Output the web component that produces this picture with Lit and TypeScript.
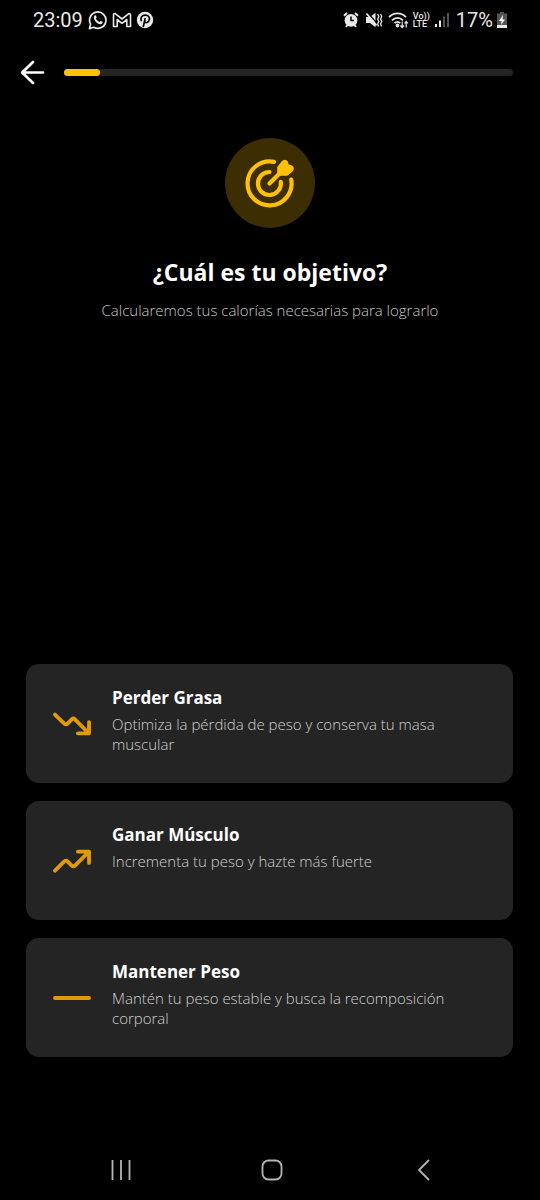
import { LitElement, html, css, svg } from "lit";
import { customElement, property } from "lit/decorators.js";

const trendDown = svg`<path d="M2 7.2 L8.3 13.2 Q9.4 14.3 10.5 13.2 L13.3 10.4 Q14.4 9.3 15.5 10.4 L24.5 19.4 M17.5 19.8 H25 V12.2" />`;
const trendUp = svg`<path d="M2 20 L8.3 13.8 Q9.4 12.7 10.5 13.8 L13.3 16.6 Q14.4 17.7 15.5 16.6 L24.5 7.6 M17.5 7.2 H25 V14.8" />`;
const flat = svg`<path d="M2 13.5 H25" />`;

const goals = [
  { title: "Perder Grasa", text: "Optimiza la pérdida de peso y conserva tu masa muscular", icon: trendDown },
  { title: "Ganar Músculo", text: "Incrementa tu peso y hazte más fuerte", icon: trendUp },
  { title: "Mantener Peso", text: "Mantén tu peso estable y busca la recomposición corporal", icon: flat },
];

@customElement("status-bar")
class StatusBar extends LitElement {
  static styles = css`
    :host {
      display: flex;
      align-items: center;
      justify-content: space-between;
      height: 40px;
      padding: 0 33px;
      color: #e8e8e8;
      font: 20px/24px Roboto, sans-serif;
    }
    .side { display: flex; align-items: center; gap: 4px; }
    .time { margin-right: 1px; }
    .level { margin-left: 2px; }
    svg { display: block; flex: none; }
    .volte {
      display: flex;
      flex-direction: column;
      font: 500 9px/8px Roboto, sans-serif;
    }
  `;
  render() {
    return html`
      <div class="side">
        <span class="time">23:09</span>
        <svg width="20" height="20" viewBox="0 0 20 20" fill="none" stroke="currentColor" stroke-width="1.7">
          <path d="M1.4 18.6 L2.6 14.1 A8.2 8.2 0 1 1 5.8 17.3 Z" stroke-linejoin="round" />
          <path d="M6.2 6 C6.8 5 7.8 5 8 5.6 L8.7 7.3 L7.9 8.5 C8.7 10.2 9.8 11.2 11.5 12 L12.7 10.9 L14.5 11.8 C15 12.2 14.6 13.6 13.5 14 C10 15.3 4.5 9.8 6.2 6 Z" fill="currentColor" stroke="none" />
        </svg>
        <svg width="20" height="16" viewBox="0 0 20 16" fill="none" stroke="currentColor" stroke-width="1.6" stroke-linejoin="round">
          <path d="M1.5 14.5 V3 Q1.5 1.4 3.2 1.6 L10 7 L16.8 1.6 Q18.5 1.4 18.5 3 V14.5 H14.8 V7.5 L10 11.3 L5.2 7.5 V14.5 Z" />
        </svg>
        <svg width="18" height="18" viewBox="0 0 18 18">
          <circle cx="9" cy="9" r="8.2" fill="currentColor" />
          <path d="M5.6 10.2 C3.6 7 6 4.2 9.3 4.2 C12.4 4.2 13.8 6.2 13.4 8.4 C12.9 11.3 10 12.4 8.7 10.8 M9.3 7 L7.2 16" fill="none" stroke="#000" stroke-width="1.7" />
        </svg>
      </div>
      <div class="side">
        <svg width="18" height="18" viewBox="0 0 18 18">
          <path d="M2 4.8 L5 2 M16 4.8 L13 2 M4 15.8 L5.4 14 M14 15.8 L12.6 14" stroke="currentColor" stroke-width="2" />
          <circle cx="9" cy="9.3" r="6.4" fill="currentColor" />
          <path d="M9 5.5 V9.6 H12" fill="none" stroke="#000" stroke-width="1.5" />
        </svg>
        <svg width="20" height="18" viewBox="0 0 20 18">
          <path d="M2 6 H6 L11.5 1.8 V16.2 L6 12 H2 Z" fill="currentColor" />
          <path d="M3.5 1.5 L14 13.5" stroke="#000" stroke-width="1.4" />
          <path d="M2.5 2.5 L12.5 14.5" stroke="currentColor" stroke-width="1.8" />
          <path d="M13.6 3 L14.9 5.5 L13.6 8 L14.9 10.5 L13.6 13 L14.6 15.5 M16.6 3 L17.7 5.5 L16.6 8 L17.7 10.5 L16.6 13 L17.6 15.5" fill="none" stroke="currentColor" stroke-width="1.3" />
        </svg>
        <svg width="21" height="18" viewBox="0 0 21 18" fill="none" stroke="currentColor" stroke-width="1.8">
          <path d="M1 6.2 C6 1.2 13 1.2 18 6.2 M4 9.4 C7.3 6.2 11.7 6.2 15 9.4 M6.6 12.2 C8.4 10.5 10.6 10.5 12.2 12.2" />
          <circle cx="9.5" cy="14.5" r="1" fill="currentColor" />
          <path d="M14.2 10.5 V16.5 M12.4 14.5 L14.2 16.5 L16 14.5 M18.2 16.5 V10.5 M16.6 12.3 L18.2 10.5 L19.8 12.3" stroke-width="1.2" />
        </svg>
        <span class="volte"><span>Vo))</span><span>LTE</span></span>
        <svg width="16" height="16" viewBox="0 0 16 16" fill="currentColor">
          <rect x="1" y="12" width="2" height="3" />
          <rect x="5" y="8.5" width="2" height="6.5" />
          <rect x="9" y="4.5" width="2" height="10.5" opacity="0.35" />
          <rect x="13" y="1" width="2" height="14" opacity="0.35" />
        </svg>
        <span class="level">17%</span>
        <svg width="10" height="18" viewBox="1 0 10 18">
          <path d="M4 1 H8 V2.5 H11 V17 H1 V2.5 H4 Z" fill="#555" />
          <path d="M1 14 H11 V17 H1 Z" fill="currentColor" />
          <path d="M7 4 L3 10 H5.6 L5 14 L9 8.4 H6.5 Z" fill="#fff" />
        </svg>
      </div>
    `;
  }
}

@customElement("goal-card")
class GoalCard extends LitElement {
  @property({ attribute: false }) goal = goals[0];
  static styles = css`
    :host { display: block; }
    .card {
      display: flex;
      width: 100%;
      min-height: 119px;
      box-sizing: border-box;
      padding: 22px 26px;
      gap: 20px;
      border: 0;
      border-radius: 13px;
      background: #242424;
      color: #fff;
      font-family: "Open Sans", sans-serif;
      text-align: left;
      cursor: pointer;
    }
    .icon {
      flex: none;
      align-self: center;
      fill: none;
      stroke: #e19a0a;
      stroke-width: 2.6;
      stroke-linecap: round;
      stroke-linejoin: round;
    }
    .copy { display: flex; flex-direction: column; gap: 4px; align-self: flex-start; }
    .title { font-size: 17px; line-height: 24px; font-weight: 700; }
    .text { font-size: 15px; line-height: 20px; font-weight: 300; color: #d0d0d0; }
  `;
  render() {
    return html`
      <button class="card" type="button">
        <svg class="icon" width="40" height="40" viewBox="0 0 27 27" aria-hidden="true">${this.goal.icon}</svg>
        <span class="copy">
          <span class="title">${this.goal.title}</span>
          <span class="text">${this.goal.text}</span>
        </span>
      </button>
    `;
  }
}

@customElement("app-root")
class AppRoot extends LitElement {
  @property({ type: Number }) progress = 8;
  static styles = css`
    :host {
      display: flex;
      flex-direction: column;
      min-height: 100vh;
      background: #000;
      color: #fff;
      font-family: "Open Sans", sans-serif;
    }
    button { cursor: pointer; }
    svg { display: block; }
    .top {
      display: flex;
      align-items: center;
      gap: 18px;
      padding: 18px 27px 0 18px;
    }
    .back { padding: 0; border: 0; background: none; color: #fff; }
    .track { flex: 1; height: 7px; border-radius: 4px; background: #242424; }
    .bar { height: 100%; border-radius: 4px; background: #ffc107; }
    .hero {
      display: flex;
      flex-direction: column;
      align-items: center;
      padding: 52px 26px 0;
      text-align: center;
    }
    .badge {
      display: grid;
      place-items: center;
      width: 90px;
      height: 90px;
      border-radius: 50%;
      background: #3c2d02;
    }
    h1 { margin: 28px 0 0; font-size: 23px; line-height: 32px; font-weight: 700; }
    p { margin: 12px 0 0; font-size: 15px; line-height: 20px; font-weight: 300; color: #c8c8c8; }
    .goals {
      display: flex;
      flex-direction: column;
      gap: 18px;
      margin-top: auto;
      padding: 40px 27px 83px 26px;
    }
    .nav {
      display: grid;
      grid-template-columns: repeat(3, 1fr);
      align-items: center;
      height: 60px;
      padding: 0 41px 0 45px;
    }
    .nav button {
      justify-self: center;
      padding: 0;
      border: 0;
      background: none;
      color: #b4b4b4;
    }
    .nav svg { fill: none; stroke: currentColor; stroke-width: 1.8; }
  `;
  render() {
    return html`
      <status-bar></status-bar>
      <header class="top">
        <button class="back" type="button" aria-label="Volver">
          <svg width="28" height="28" viewBox="0 0 28 28" fill="none" stroke="currentColor" stroke-width="2.7" stroke-linecap="round" stroke-linejoin="round">
            <path d="M25 14.5 H4.5 M15 4 L4.2 14.5 L15 25" />
          </svg>
        </button>
        <div class="track" role="progressbar" aria-label="Progreso" aria-valuenow=${this.progress} aria-valuemin="0" aria-valuemax="100">
          <div class="bar" style="width:${this.progress}%"></div>
        </div>
      </header>
      <section class="hero">
        <div class="badge">
          <svg width="56" height="56" viewBox="0 0 56 56" fill="none" stroke="#ffc107" stroke-width="4.2" stroke-linecap="round" stroke-linejoin="round" aria-hidden="true">
            <path d="M32 6.9 A22 22 0 1 0 49.2 24.5" />
            <path d="M27.5 17 A11.5 11.5 0 1 0 38.8 26.8" />
            <path d="M27.5 28.5 L39 17" />
            <path d="M37 19 V12.5 L41 7.5 Q43 5.5 44.2 7.5 L45.2 10.8 L49.3 12.2 Q51 13.5 49 15.5 L44.5 19 Z" fill="#ffc107" stroke-width="3.6" />
          </svg>
        </div>
        <h1>¿Cuál es tu objetivo?</h1>
        <p>Calcularemos tus calorías necesarias para lograrlo</p>
      </section>
      <main class="goals">
        ${goals.map((goal) => html`<goal-card .goal=${goal}></goal-card>`)}
      </main>
      <nav class="nav">
        <button type="button" aria-label="Recientes">
          <svg width="24" height="24" viewBox="0 0 24 24"><path d="M3.5 2 V22 M12 2 V22 M20.5 2 V22" /></svg>
        </button>
        <button type="button" aria-label="Inicio">
          <svg width="24" height="24" viewBox="0 0 24 24"><rect x="2.5" y="2.5" width="19" height="19" rx="6" /></svg>
        </button>
        <button type="button" aria-label="Atrás">
          <svg width="24" height="24" viewBox="0 0 24 24"><path d="M18 2 L8 12 L18 22" /></svg>
        </button>
      </nav>
    `;
  }
}
